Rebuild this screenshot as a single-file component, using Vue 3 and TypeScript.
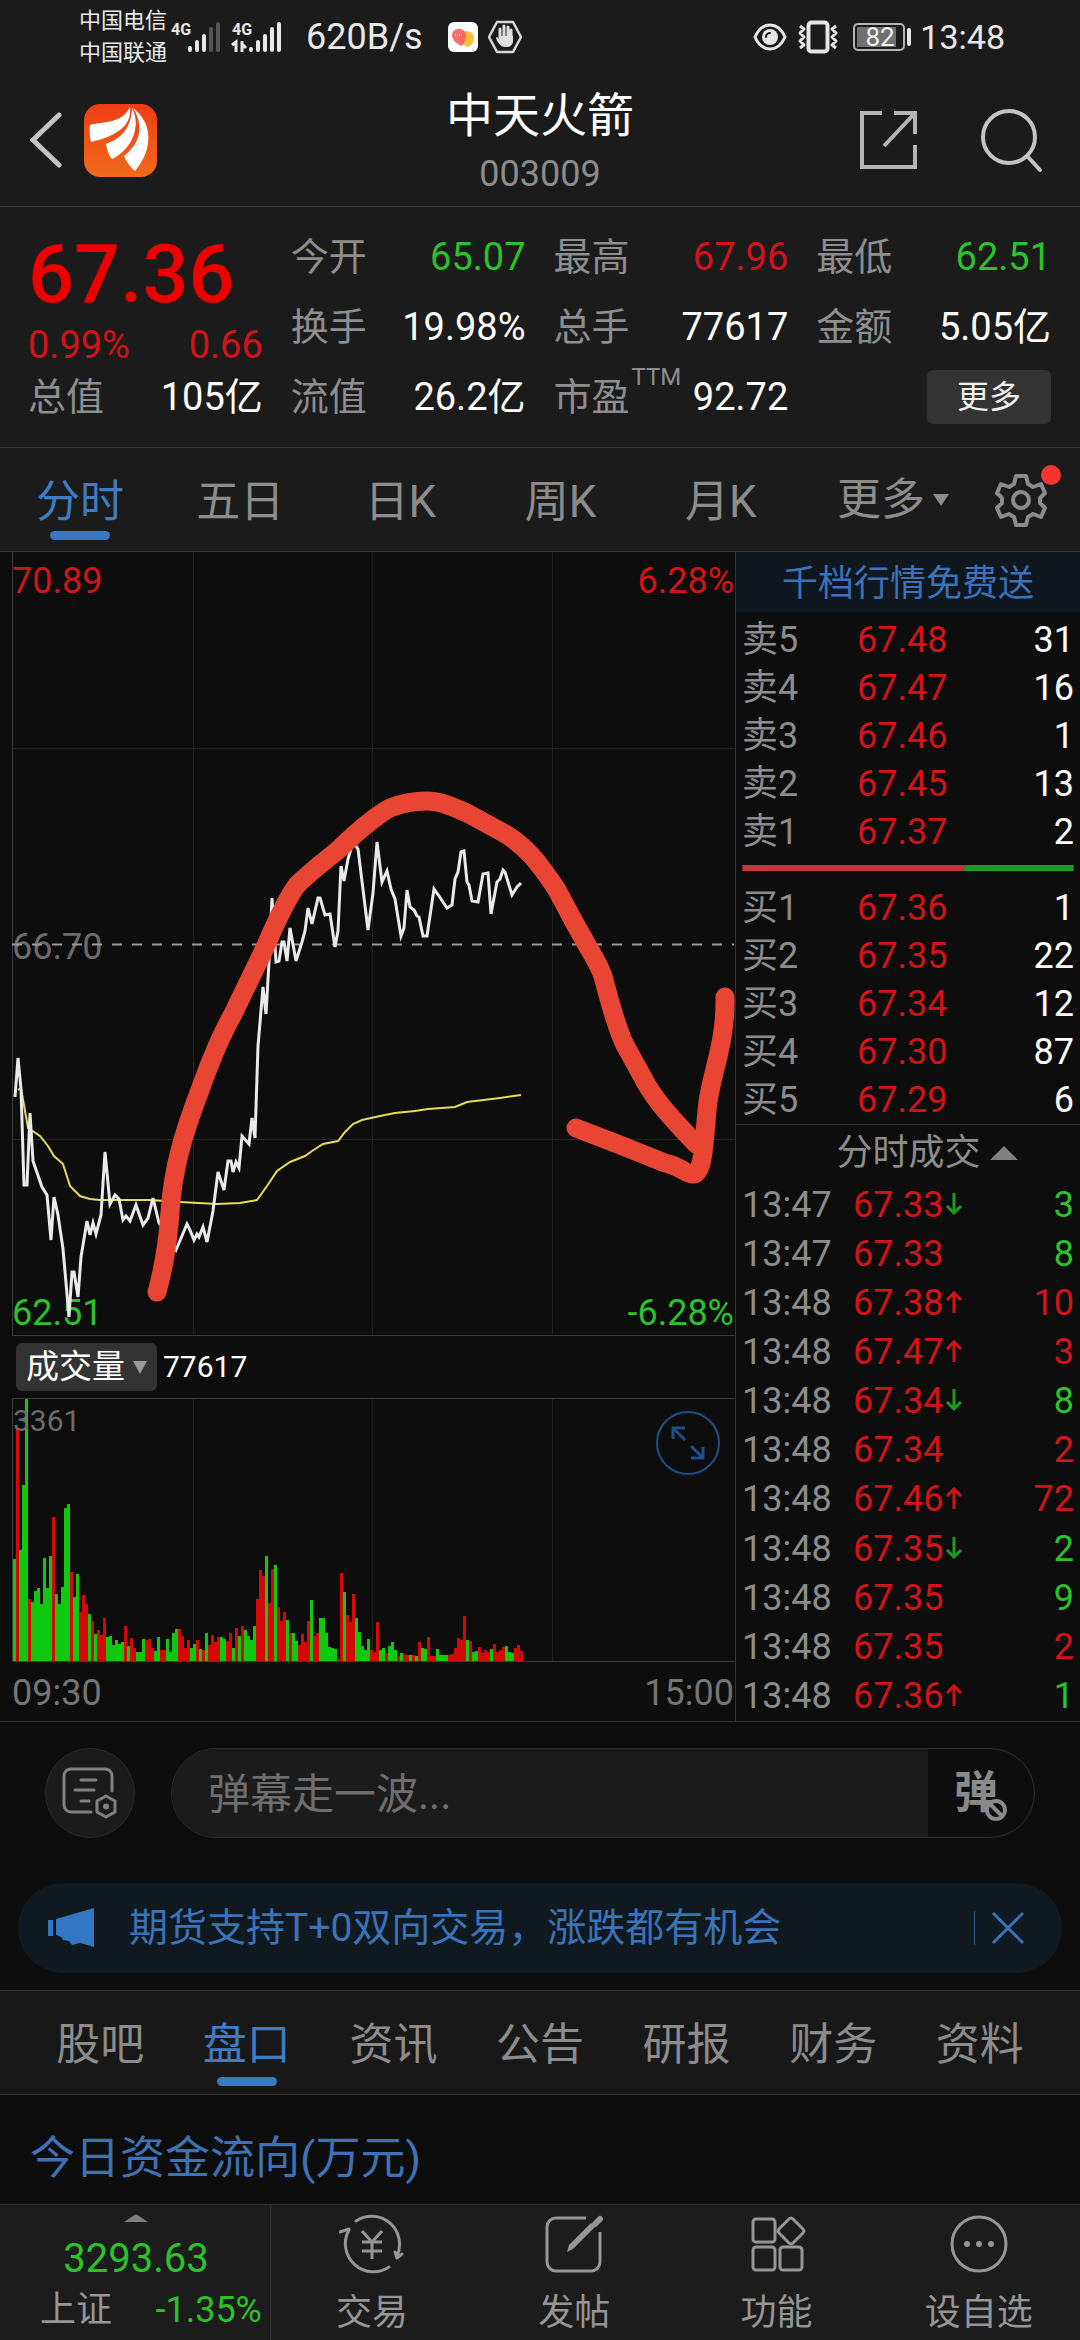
<script setup lang="ts">
import { ref } from 'vue'

type Tone = 'up' | 'down' | 'flat'
interface Cell { label: string; value: string; tone: Tone; sup?: string }
interface Level { label: string; price: string; qty: number }
interface Trade { time: string; price: string; dir: '' | 'up' | 'down'; qty: number; side: 'up' | 'down' }

const quoteColumns: Cell[][] = [
  [
    { label: '今开', value: '65.07', tone: 'down' },
    { label: '换手', value: '19.98%', tone: 'flat' },
    { label: '流值', value: '26.2亿', tone: 'flat' },
  ],
  [
    { label: '最高', value: '67.96', tone: 'up' },
    { label: '总手', value: '77617', tone: 'flat' },
    { label: '市盈', value: '92.72', tone: 'flat', sup: 'TTM' },
  ],
  [
    { label: '最低', value: '62.51', tone: 'down' },
    { label: '金额', value: '5.05亿', tone: 'flat' },
  ],
]

const periods = ['分时', '五日', '日K', '周K', '月K']
const activePeriod = ref('分时')

const sections = ['股吧', '盘口', '资讯', '公告', '研报', '财务', '资料']
const activeSection = ref('盘口')

const comment = ref('')
const showNotice = ref(true)

const asks: Level[] = [
  { label: '卖5', price: '67.48', qty: 31 },
  { label: '卖4', price: '67.47', qty: 16 },
  { label: '卖3', price: '67.46', qty: 1 },
  { label: '卖2', price: '67.45', qty: 13 },
  { label: '卖1', price: '67.37', qty: 2 },
]
const bids: Level[] = [
  { label: '买1', price: '67.36', qty: 1 },
  { label: '买2', price: '67.35', qty: 22 },
  { label: '买3', price: '67.34', qty: 12 },
  { label: '买4', price: '67.30', qty: 87 },
  { label: '买5', price: '67.29', qty: 6 },
]
const trades: Trade[] = [
  { time: '13:47', price: '67.33', dir: 'down', qty: 3, side: 'down' },
  { time: '13:47', price: '67.33', dir: '', qty: 8, side: 'down' },
  { time: '13:48', price: '67.38', dir: 'up', qty: 10, side: 'up' },
  { time: '13:48', price: '67.47', dir: 'up', qty: 3, side: 'up' },
  { time: '13:48', price: '67.34', dir: 'down', qty: 8, side: 'down' },
  { time: '13:48', price: '67.34', dir: '', qty: 2, side: 'up' },
  { time: '13:48', price: '67.46', dir: 'up', qty: 72, side: 'up' },
  { time: '13:48', price: '67.35', dir: 'down', qty: 2, side: 'down' },
  { time: '13:48', price: '67.35', dir: '', qty: 9, side: 'down' },
  { time: '13:48', price: '67.35', dir: '', qty: 2, side: 'up' },
  { time: '13:48', price: '67.36', dir: 'up', qty: 1, side: 'down' },
]

const priceLine =
  '15,545 18,506 21,537 24,633 27,633 30,561 33,609 42,635 47,643 51,688 54,645 58,663 63,697 69,765 72,720 74,720 78,745 81,705 87,669 90,683 93,671 96,682 101,663 105,600 110,652 115,643 119,647 123,668 126,664 130,669 136,653 143,673 148,666 153,646 159,671 168,684 176,698 187,672 190,678 194,688 197,682 199,685 203,675 207,690 213,659 218,620 224,638 228,609 231,609 233,620 236,610 239,616 242,584 249,592 252,566 255,586 258,494 263,435 266,462 269,410 272,346 276,410 279,409 282,390 284,390 287,409 290,376 296,409 302,390 305,379 308,356 312,372 318,346 320,346 325,363 330,362 335,395 338,379 341,314 344,329 348,307 353,290 358,297 368,378 373,341 377,290 382,330 387,319 391,337 395,347 401,384 404,376 407,338 410,355 414,358 417,364 419,365 423,384 427,384 434,337 439,344 447,356 452,353 455,327 458,320 461,300 464,299 467,330 469,333 472,349 478,350 483,322 488,321 491,362 497,330 500,327 503,318 505,320 512,343 517,335 521,331'
const averageLine =
  '18,538 21,536 28,576 40,584 48,594 54,604 63,612 70,634 80,644 90,647 100,648 150,648 180,650 217,652 240,651 257,648 267,634 277,619 290,610 305,604 312,599 323,592 338,589 345,580 353,572 362,568 380,564 395,561 415,559 428,557 455,555 467,550 500,546 521,543'

/* One entry per minute: direction of the minute and its relative volume. */
const minutes =
  'g306 r699 g334 g526 g788 r186 g176 g209 g218 g170 g308 g220 g316 r430 g200 g170 g221 g457 g469 r266 g192 g262 r147 r199 r171 g142 r119 g82 r92 r79 r128 g71 g76 g49 g64 g52 g57 r105 g46 r69 r40 g28 g28 g66 r64 r66 r39 g30 g73 r32 r32 g66 g28 g84 g96 r96 r76 r40 r64 g40 g52 r64 g36 r34 g83 r49 r79 r56 r72 g72 g66 r61 r84 g40 r98 g74 r105 g94 g74 g64 g105 r186 r274 r254 g315 r173 r276 g289 r161 r119 r146 g122 r84 g84 g59 r49 r80 r56 r120 g184 r74 r84 g129 g129 g84 g41 g39 g36 r6 r264 g206 r139 r116 r201 g128 g88 g44 g32 g67 r32 r26 r116 g34 g39 r24 g46 g56 g32 r14 g24 r21 r18 g19 r18 g16 r58 g40 g36 r72 r14 r16 g36 g18 g19 g18 r18 r20 r39 r69 r64 r136 g64 r61 g28 g30 r42 r24 r34 r26 g36 r52 r28 r34 r42 g44 g28 g24 r39 r49 r29'
const bars = minutes.split(' ').map((m, i) => {
  const h = Math.round((Number(m.slice(1)) / 788) * 263)
  return { x: 13 + i * 3, y: 263 - h, h, up: m[0] === 'r' }
})
</script>

<template>
  <div class="page">
    <div class="status">
      <div class="carriers"><span>中国电信</span><span>中国联通</span></div>
      <svg class="signal" width="114" height="42" viewBox="0 -4 114 42">
        <text x="1" y="15" class="net">4G</text>
        <text x="62" y="15" class="net">4G</text>
        <g stroke-linecap="round" stroke-width="4" stroke="#e8e8e8">
          <path d="M20 28v2M27 22v8M34 16v14" />
          <path d="M41 9v21M48 4v26" stroke="#555" />
          <path d="M81 29v1M88 22v8M95 16v14M102 9v21M109 4v26" />
        </g>
        <path d="M62 25l4-3v10M72 21v11M72 24l4 4" fill="none" stroke="#e8e8e8" stroke-width="3" />
      </svg>
      <span class="rate">620B/s</span>
      <svg class="app" width="30" height="30" viewBox="0 0 30 30">
        <rect width="30" height="30" rx="6" fill="#fff" />
        <path d="M20 25c-4-1-8-4-8-9 0-9 14-9 14 0 0 5-3 8-6 9z" fill="#f9bf3f" />
        <path d="M13 24C7 21 4 17 4 13c0-8 14-8 14 0 0 5-2 9-5 11z" fill="#f2605c" opacity=".9" />
        <path d="M7 13h8" stroke="#fff" stroke-width="1" stroke-dasharray="1 1" />
      </svg>
      <svg width="34" height="34" viewBox="0 0 34 34">
        <path d="M9 2h16l8 15-8 15H9L1 17z" fill="none" stroke="#d8d8d8" stroke-width="2.5" stroke-linejoin="round" />
        <path d="M12 9v9M16 6v12M20 7v11M23 10v9" stroke="#e0e0e0" stroke-width="3" stroke-linecap="round" />
        <path d="M11 16h14v5c0 3-2 6-6 6h-2c-4 0-8-5-9-9l1-1 3 3z" fill="#e0e0e0" />
      </svg>
      <div class="status-right">
        <svg width="34" height="28" viewBox="0 0 34 28">
          <path d="M2 14C9-2 25-2 32 14 25 30 9 30 2 14z" fill="none" stroke="#e6e6e6" stroke-width="3" />
          <circle cx="17" cy="14" r="8" fill="#e6e6e6" />
          <path d="M13 14a4 4 0 0 1 4-4" fill="none" stroke="#1b1b1b" stroke-width="2" stroke-linecap="round" />
        </svg>
        <svg class="vibrate" width="42" height="34" viewBox="0 0 42 34" fill="none" stroke="#e6e6e6" stroke-width="3">
          <rect x="11.500" y="2.500" width="19" height="29" rx="3" stroke-width="4" />
          <path d="M3 6l4 3-4 4 4 4-4 4 4 4-4 3M39 6l-4 3 4 4-4 4 4 4-4 4 4 3" stroke-linejoin="round" />
        </svg>
        <svg class="battery" width="59" height="28" viewBox="0 0 59 28">
          <rect x="1" y="1" width="50" height="26" rx="4" fill="none" stroke="#b5b5b5" stroke-width="2" />
          <rect x="4" y="4" width="39" height="20" fill="#707070" />
          <rect x="54" y="5" width="4" height="18" rx="2" fill="#e6e6e6" />
          <text x="27" y="23" text-anchor="middle" class="level">82</text>
        </svg>
        <span class="clock">13:48</span>
      </div>
    </div>

    <header class="header">
      <div class="header-left">
        <button class="icon-btn" aria-label="返回">
          <svg width="32" height="56" viewBox="0 0 32 56"><path d="M29 3L3 28l26 25" fill="none" stroke="#c4c4c4" stroke-width="5" stroke-linecap="round" /></svg>
        </button>
        <svg class="logo" width="73" height="73" viewBox="0 0 73 73">
          <defs><linearGradient id="brand" x1="0" y1="0" x2="0" y2="1"><stop offset="0" stop-color="#ee3d14" /><stop offset="1" stop-color="#f06a1c" /></linearGradient></defs>
          <rect width="73" height="73" rx="16" fill="url(#brand)" />
          <g fill="#fff">
            <path d="M6 21c15-4 31-1 40-18 2 18-12 29-39 35-1-5-2-11-1-17z" />
            <path d="M48 4c10 19-1 42-20 51-3-3-5-9-6-15 16-6 25-16 26-36z" />
            <path d="M49 4c17 12 23 38 2 63-5-4-9-10-11-15 15-11 21-29 9-48z" />
          </g>
        </svg>
      </div>
      <div class="heading"><h1>中天火箭</h1><p>003009</p></div>
      <div class="header-right">
        <button class="icon-btn" aria-label="分享">
          <svg width="62" height="62" viewBox="0 0 62 62" fill="none" stroke="#b4b4b4" stroke-width="4">
            <path d="M24 4H4v54h53V36M36 4h21v21M57 4L26 37" />
          </svg>
        </button>
        <button class="icon-btn" aria-label="搜索">
          <svg width="66" height="66" viewBox="0 0 66 66" fill="none" stroke="#c4c4c4" stroke-width="4" stroke-linecap="round">
            <circle cx="30" cy="30" r="26" /><path d="M49 50l12 13" />
          </svg>
        </button>
      </div>
    </header>

    <section class="quote">
      <div class="quote-col">
        <div class="last">67.36</div>
        <div class="change"><span>0.99%</span><span>0.66</span></div>
        <div class="cell"><span class="label">总值</span><span class="value">105亿</span></div>
      </div>
      <div v-for="(col, i) in quoteColumns" :key="i" class="quote-col">
        <div v-for="c in col" :key="c.label" class="cell">
          <span class="label">{{ c.label }}</span>
          <span v-if="c.sup" class="sup">{{ c.sup }}</span>
          <span class="value" :class="c.tone">{{ c.value }}</span>
        </div>
        <div v-if="col.length < 3" class="cell"><button class="more">更多</button></div>
      </div>
    </section>

    <nav class="tabs periods">
      <button v-for="p in periods" :key="p" class="tab" :class="{ active: p === activePeriod }" @click="activePeriod = p">{{ p }}</button>
      <button class="tab more-tab">更多<svg width="16" height="12" viewBox="0 0 16 12"><path d="M0 0h16L8 12z" fill="#8c8c8c" /></svg></button>
      <button class="icon-btn gear" aria-label="设置">
        <svg width="54" height="54" viewBox="0 0 54 54" fill="none" stroke="#8c8c8c" stroke-width="4" stroke-linejoin="round">
          <path d="M22 3h10l2 8 5 3 8-3 4 9-5 5v5l5 5-4 9-8-3-5 3-2 8H22l-2-8-5-3-8 3-4-9 5-5v-5l-5-5 4-9 8 3 5-3z" />
          <circle cx="27" cy="27" r="8" />
        </svg>
        <i class="dot"></i>
      </button>
    </nav>

    <main class="market">
      <div class="charts">
        <svg class="chart" viewBox="0 0 735 784">
          <g class="grid">
            <path d="M193.500 0v784M372.500 0v784M552.500 0v784M13 196.500h722M13 587.500h722" />
          </g>
          <path class="frame" d="M12.500 0v783.500H735" />
          <text x="12" y="41" class="axis red">70.89</text>
          <text x="734" y="41" text-anchor="end" class="axis red">6.28%</text>
          <text x="12" y="407" class="axis gray">66.70</text>
          <text x="12" y="773" class="axis green">62.51</text>
          <text x="734" y="773" text-anchor="end" class="axis green">-6.28%</text>
          <path d="M12 392.500h722" stroke="#9a9a9a" stroke-width="2" stroke-dasharray="10 10" />
          <polyline :points="averageLine" fill="none" stroke="#e6dc55" stroke-width="2" />
          <polyline :points="priceLine" fill="none" stroke="#eaeaea" stroke-width="3" />
          <g fill="none" stroke="#e94535" stroke-width="19" stroke-linecap="round" stroke-linejoin="round">
            <path d="M157 740C164 715 168 690 170 660 173 615 184 580 200 538 210 510 220 485 233 462L263 400C272 380 284 350 297 333 310 320 322 311 337 299L353 284C365 273 382 260 390 256 405 250 415 249 427 249 440 249 453 255 467 261L500 279C525 292 540 312 557 338L573 368 587 393C595 407 602 418 604 428 610 450 616 475 625 493L647 533C660 555 680 575 696 592" />
            <path d="M725 445C726 490 712 520 708 550 704 580 705 622 693 622 686 622 680 614 665 611L620 593 576 576" />
          </g>
        </svg>
        <div class="vol-bar">
          <button class="vol-btn">成交量<svg width="14" height="13" viewBox="0 0 14 13"><path d="M0 0h14L7 13z" fill="#9a9a9a" /></svg></button>
          <span>77617</span>
        </div>
        <div class="volume">
          <svg class="chart" viewBox="0 0 735 264">
            <path class="grid" d="M193.500 0v264M372.500 0v264M552.500 0v264" />
            <rect v-for="b in bars" :key="b.x" :x="b.x" :y="b.y" width="3" :height="b.h" :fill="b.up ? '#d40808' : '#0fc80f'" />
            <path class="frame" d="M735 .5H12.500v263H735" />
            <text x="13" y="33" class="axis small">3361</text>
          </svg>
          <button class="icon-btn expand" aria-label="全屏">
            <svg width="66" height="66" viewBox="0 0 66 66" fill="none" stroke="#1f4f86" stroke-width="2">
              <circle cx="33" cy="33" r="31" />
              <path d="M30 30L18 18M18 29V18h12M36 36l12 12M48 37v11H36" stroke-width="3" />
            </svg>
          </button>
        </div>
        <div class="times"><span>09:30</span><span>15:00</span></div>
      </div>

      <aside class="depth">
        <a class="promo" href="#level2">千档行情免费送</a>
        <table class="book">
          <tbody>
            <tr v-for="l in asks" :key="l.label"><th scope="row">{{ l.label }}</th><td class="up">{{ l.price }}</td><td class="qty">{{ l.qty }}</td></tr>
          </tbody>
        </table>
        <svg class="ratio" viewBox="0 0 333 6"><path d="M0 0h226l-6 6H0z" fill="#c8343c" /><path d="M226 0h107v6H220z" fill="#1c9c20" /></svg>
        <table class="book">
          <tbody>
            <tr v-for="l in bids" :key="l.label"><th scope="row">{{ l.label }}</th><td class="up">{{ l.price }}</td><td class="qty">{{ l.qty }}</td></tr>
          </tbody>
        </table>
        <button class="ticks-head">分时成交<svg width="28" height="14" viewBox="0 0 28 14"><path d="M0 14L14 0l14 14z" fill="#808080" /></svg></button>
        <table class="book ticks">
          <tbody>
            <tr v-for="(t, i) in trades" :key="i">
              <th scope="row">{{ t.time }}</th>
              <td class="up">{{ t.price }}<svg v-if="t.dir" :class="['arrow', t.dir]" width="20" height="24" viewBox="0 0 20 24" fill="none" stroke-width="3"><path :d="t.dir === 'up' ? 'M10 22V2M3 9l7-7 7 7' : 'M10 0v20M3 13l7 7 7-7'" /></svg></td>
              <td class="qty" :class="t.side">{{ t.qty }}</td>
            </tr>
          </tbody>
        </table>
      </aside>
    </main>

    <form class="danmu" @submit.prevent>
      <button type="button" class="round" aria-label="弹幕设置">
        <svg width="56" height="52" viewBox="0 0 56 52" fill="none" stroke="#808080" stroke-width="3">
          <path d="M29 45H9c-4 0-7-3-7-7V9c0-4 3-7 7-7h34c4 0 7 3 7 7v15M19 13h15M13 23h19M19 34h8" stroke-linecap="round" />
          <path d="M44 29l9 5v11l-9 5-9-5V34z" stroke-linejoin="round" /><circle cx="44" cy="39.500" r="3" fill="#808080" stroke="none" />
        </svg>
      </button>
      <div class="field">
        <input v-model="comment" type="text" aria-label="弹幕" placeholder="弹幕走一波..." />
        <button type="button" class="toggle" aria-label="关闭弹幕">
          <span>弹</span>
          <svg width="24" height="24" viewBox="0 0 24 24"><circle cx="12" cy="12" r="9" fill="#0d0d0d" stroke="#8a8a8a" stroke-width="4" /><path d="M6 6l12 12" stroke="#8a8a8a" stroke-width="4" /></svg>
        </button>
      </div>
    </form>

    <div v-if="showNotice" class="notice">
      <svg width="46" height="40" viewBox="0 0 46 40" fill="#3276c4"><path d="M0 12h5v16H0zM8 11L46 0v39l-14-4-8 2-3-4-6-1-2-3-5-2z" /></svg>
      <a href="#futures">期货支持T+0双向交易，涨跌都有机会</a>
      <button class="icon-btn close" aria-label="关闭" @click="showNotice = false">
        <svg width="34" height="34" viewBox="0 0 34 34"><path d="M2 2l30 30M32 2L2 32" stroke="#3a73b8" stroke-width="3" /></svg>
      </button>
    </div>

    <nav class="tabs sections">
      <button v-for="s in sections" :key="s" class="tab" :class="{ active: s === activeSection }" @click="activeSection = s">{{ s }}</button>
    </nav>

    <h2 class="flow-title">今日资金流向(万元)</h2>

    <footer class="bottom">
      <button class="index">
        <svg width="24" height="8" viewBox="0 0 24 8"><path d="M0 8L12 0l12 8z" fill="#808080" /></svg>
        <span class="index-value">3293.63</span>
        <span class="index-row"><span>上证</span><span class="down">-1.35%</span></span>
      </button>
      <a href="#trade" class="nav-item">
        <svg width="66" height="60" viewBox="0 0 66 60" fill="none" stroke="#969696" stroke-width="3" stroke-linecap="round">
          <path d="M17 7A28 28 0 0 1 58 42M1 18l9-3M10 16A28 28 0 0 0 50 53M58 44l5-4M58 44l-2-6" />
          <path d="M23 17l10 11 10-11M33 28v17M23 28h20M23 37h20" stroke-linecap="butt" />
        </svg>交易
      </a>
      <a href="#post" class="nav-item">
        <svg width="60" height="60" viewBox="0 0 60 60" fill="none" stroke="#969696" stroke-width="3">
          <path d="M42 4H12a9 9 0 0 0-9 9v35a9 9 0 0 0 9 9h35a9 9 0 0 0 9-9V18" />
          <path d="M23 38l2-7 22-22 4 4-22 22z" fill="#969696" stroke="none" /><path d="M51 10l5-5" stroke-width="6" stroke-linecap="round" />
        </svg>发帖
      </a>
      <a href="#features" class="nav-item">
        <svg width="58" height="60" viewBox="0 0 58 60" fill="none" stroke="#969696" stroke-width="3">
          <rect x="5" y="5" width="22" height="23" rx="3" /><rect x="5" y="33" width="22" height="23" rx="3" /><rect x="32" y="33" width="22" height="23" rx="3" />
          <path d="M41 5q2-2 4 0l10 10q2 2 0 4L45 29q-2 2-4 0L31 19q-2-2 0-4z" />
        </svg>功能
      </a>
      <a href="#watchlist" class="nav-item">
        <svg width="60" height="60" viewBox="0 0 60 60"><circle cx="30" cy="30" r="27" fill="none" stroke="#969696" stroke-width="3" /><g fill="#969696"><circle cx="18" cy="30" r="3" /><circle cx="30" cy="30" r="3" /><circle cx="42" cy="30" r="3" /></g></svg>设自选
      </a>
    </footer>
  </div>
</template>

<style>
body { background: #0d0d0d; }
</style>

<style scoped>
.page {
  display: flex;
  flex-direction: column;
  min-height: 100vh;
  background: #0d0d0d;
  color: #8c8c8c;
  font-family: Roboto, "Noto Sans CJK SC", sans-serif;
  font-size: 36px;
}
.page *, .page { box-sizing: border-box; }
svg { display: block; flex: none; }
button { border: 0; padding: 0; background: none; color: inherit; font: inherit; }
a { color: inherit; text-decoration: none; }
h1, h2, p { margin: 0; font-weight: 400; }
.icon-btn { display: block; }
.up { color: #d3131a; }
.down { color: #2cc22c; }
.flat { color: #fff; }

.status { display: flex; align-items: center; height: 74px; padding: 0 75px 0 79px; background: #1b1b1b; color: #e8e8e8; }
.carriers { display: flex; flex-direction: column; font-size: 22px; line-height: 32px; }
.signal { margin-left: 3px; }
.net { font: 700 16px Roboto, sans-serif; fill: #e8e8e8; }
.rate { margin: 0 25px 0 22px; }
.app { margin-right: 10px; }
.status-right { display: flex; align-items: center; margin-left: auto; font-size: 34px; }
.vibrate { margin: 0 14px 0 10px; }
.level { font: 26px Roboto, sans-serif; fill: #f0f0f0; }
.clock { margin-left: 8px; }

.header { display: grid; grid-template-columns: 1fr auto 1fr; align-items: center; height: 133px; border-bottom: 1px solid #333; background: #1b1b1b; }
.header-left { display: flex; align-items: center; gap: 22px; padding-left: 30px; }
.heading { align-self: end; padding-bottom: 4px; text-align: center; }
.heading h1 { color: #fff; font-size: 47px; line-height: 60px; }
.heading p { line-height: 56px; }
.header-right { display: flex; align-items: center; justify-content: flex-end; gap: 59px; padding-right: 35px; }

.quote { display: grid; grid-template-columns: repeat(4, 1fr); gap: 28px; padding: 15px 29px 15px 28px; border-bottom: 1px solid #333; background: #1b1b1b; font-size: 38px; }
.last { color: #ee0000; font-size: 81px; font-weight: 500; line-height: 106px; }
.change { display: flex; justify-content: space-between; color: #d3131a; line-height: 34px; }
.cell { display: flex; align-items: center; height: 70px; color: #fff; line-height: 70px; }
.label { color: #8e8e90; }
.value { margin-left: auto; }
.value.down { color: #2cc22c; }
.value.up { color: #d3131a; }
.sup { align-self: flex-start; margin-left: 2px; color: #8e8e90; font-size: 24px; line-height: 30px; }
.more { width: 124px; height: 54px; margin-left: auto; border-radius: 6px; background: #333; color: #f0f0f0; font-size: 32px; line-height: 54px; }

.tabs { display: flex; height: 104px; border-bottom: 1px solid #333; font-size: 44px; }
.periods { background: #1b1b1b; }
.tab { position: relative; flex: 1; line-height: 108px; color: #8c8c8c; white-space: nowrap; }
.tab.active { color: #3e7cc4; }
.tab.active::after { content: ""; position: absolute; left: 50%; bottom: 11px; width: 60px; height: 9px; margin-left: -30px; border-radius: 5px; background: #3a78c2; }
.more-tab { display: flex; align-items: center; justify-content: center; gap: 8px; padding-left: 12px; }
.gear { position: relative; display: flex; align-items: center; width: 107px; padding-left: 21px; }
.dot { position: absolute; top: 17px; right: 19px; width: 20px; height: 20px; border-radius: 50%; background: #f5352f; }

.market { display: grid; grid-template-columns: 735fr 345fr; border-bottom: 1px solid #333; }
.chart { width: 100%; height: auto; }
.grid { fill: none; stroke: #242424; stroke-width: 1; }
.frame { fill: none; stroke: #3a3a3a; stroke-width: 1; }
.axis { font: 36px Roboto, sans-serif; }
.axis.red { fill: #d3131a; }
.axis.green { fill: #2cc22c; }
.axis.gray { fill: #6c6c6c; }
.axis.small { font-size: 30px; fill: #6c6c6c; }
.vol-bar { display: flex; align-items: center; gap: 6px; height: 62px; padding-left: 16px; color: #fff; font-size: 30px; line-height: 48px; }
.vol-btn { display: flex; align-items: center; gap: 8px; height: 48px; padding: 0 10px; border-radius: 6px; background: #333; font-size: 33px; line-height: 48px; }
.volume { position: relative; }
.expand { position: absolute; top: 12px; right: 14px; }
.times { display: flex; justify-content: space-between; height: 59px; padding: 0 1px 0 12px; color: #757575; line-height: 62px; }

.depth { border-left: 1px solid #333; }
.promo { display: block; height: 60px; background: #10171f; color: #3a73b8; line-height: 64px; margin-bottom: 4px; text-align: center; }
.book { width: calc(100% - 12px); margin-left: 6px; border-collapse: collapse; table-layout: fixed; }
.book th { width: 115px; padding: 0; font-weight: 400; text-align: left; color: #8c8c8c; }
.book td { padding: 0; white-space: nowrap; }
.book th, .book td { line-height: 48px; }
.book .qty { width: 90px; text-align: right; }
.qty { color: #fff; }
.qty.up { color: #d3131a; }
.qty.down { color: #2cc22c; }
.ratio { width: calc(100% - 12px); margin: 9px 6px 13px; }
.ticks-head { display: flex; align-items: center; justify-content: center; gap: 9px; width: 100%; height: 57px; padding-left: 38px; border-top: 1px solid #333; line-height: 60px; }
.ticks { height: 540px; }
.ticks th { width: 111px; }
.ticks td, .ticks th { line-height: 49px; }
.arrow { display: inline-block; margin-left: 1px; }
.arrow.up { stroke: #d3131a; }
.arrow.down { stroke: #1f9a25; }

.danmu { display: flex; gap: 36px; padding: 26px 45px 45px; }
.round { display: flex; align-items: center; justify-content: center; width: 90px; height: 90px; border: 1px solid #2b2b2b; border-radius: 50%; background: #1b1b1b; }
.field { display: flex; flex: 1; height: 90px; overflow: hidden; border: 1px solid #2e2e2e; border-radius: 45px; }
.field input { flex: 1; min-width: 0; padding: 2px 36px 0; border: 0; outline: 0; background: #1b1b1b; color: #ccc; font: inherit; font-size: 42px; }
.field input::placeholder { color: #6e6e6e; opacity: 1; }
.toggle { position: relative; width: 106px; color: #8a8a8a; font-size: 44px; font-weight: 700; line-height: 88px; text-align: left; padding-left: 26px; }
.toggle svg { position: absolute; left: 56px; top: 49px; }

.notice { display: flex; align-items: center; height: 90px; margin: 0 18px 17px; padding: 0 37px 0 30px; border-radius: 45px; background: #111920; color: #3a73b8; font-size: 39px; line-height: 92px; }
.notice a { flex: 1; margin-left: 35px; }
.close { padding-left: 16px; border-left: 1px solid #2d5a90; }

.sections { height: 105px; padding: 0 27px; border-top: 1px solid #333; background: #181818; }
.sections .tab.active::after { bottom: 8px; }
.flow-title { height: 108px; padding: 0 30px; color: #3e72b4; font-size: 45px; line-height: 128px; }

.bottom { display: flex; height: 136px; margin-top: auto; border-top: 1px solid #333; background: #1c1c1c; color: #969696; }
.index { display: flex; flex-direction: column; align-items: center; width: 271px; padding: 9px 8px 0 40px; border-right: 1px solid #333; }
.index svg, .index-value { margin-right: 30px; }
.index-value { color: #2cc22c; font-size: 40px; line-height: 74px; }
.index-row { display: flex; justify-content: space-between; width: 100%; line-height: 28px; }
.nav-item { display: flex; flex: 1; flex-direction: column; align-items: center; padding-top: 9px; gap: 14px; line-height: 50px; }
</style>
